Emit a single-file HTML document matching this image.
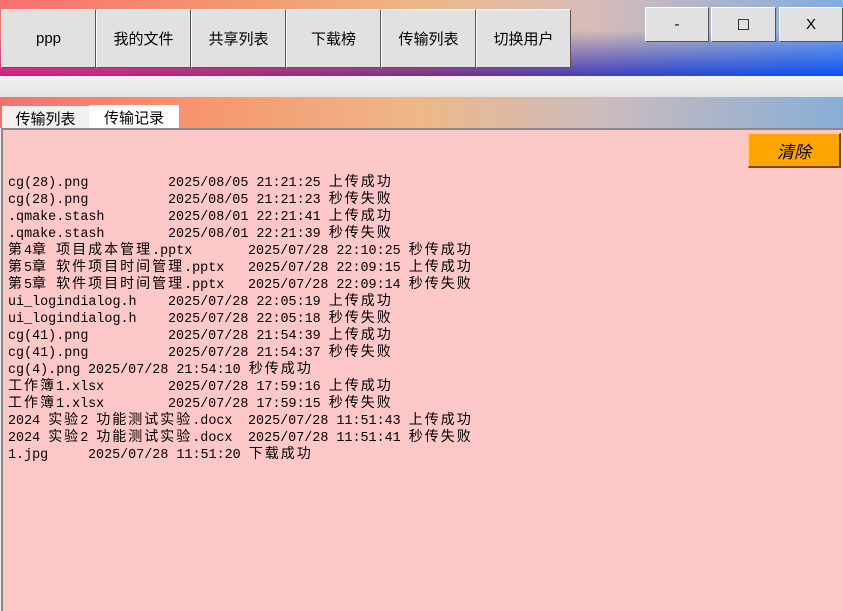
<!DOCTYPE html>
<html><head><meta charset="utf-8"><style>
*{margin:0;padding:0;box-sizing:border-box}
body{width:843px;height:611px;overflow:hidden;position:relative;background:#f0f0f0;font-family:"Liberation Sans","Noto Sans CJK SC",sans-serif;}
.hdr{position:absolute;left:0;top:0;width:843px;height:76px;background:linear-gradient(to right,#f87070,#f39a70 30%,#ecb888 50%,#d8bcb8 70%,#80ace0);}
.hdr::after{content:"";position:absolute;inset:0;background:linear-gradient(to right,#d02088,#a02880 30%,#6a3090 55%,#2848d0 80%,#0c50f8);-webkit-mask-image:linear-gradient(to bottom,transparent 40%,black 100%);mask-image:linear-gradient(to bottom,transparent 40%,black 100%);}
.b{position:absolute;z-index:2;background:#e1e1e1;border:1px solid #fff;border-right-color:#555;border-bottom-color:#555;font-size:15px;color:#000;display:flex;align-items:center;justify-content:center;}
.band{position:absolute;left:0;top:76px;width:843px;height:21px;background:linear-gradient(#f2f2f2,#e4e4e4);}
.g2{position:absolute;left:0;top:97px;width:843px;height:31px;background:linear-gradient(to right,#f87070,#f59870 25%,#eeb888 50%,#cfbcbc 70%,#88aed6);}
.tab{position:absolute;top:106px;height:22px;font-size:15px;display:flex;align-items:center;justify-content:center;padding-top:2px}
.panel{position:absolute;left:1px;top:128px;width:842px;height:483px;background:#ffc8c8;border-top:2px solid #8a8a8a;border-left:2px solid #8a8a8a;}
.clr{position:absolute;left:748px;top:133px;width:93px;height:35px;background:#ffa500;border:1px solid #ffd080;border-right:2px solid #7a4a00;border-bottom:2px solid #7a4a00;font-style:italic;font-size:17px;display:flex;align-items:center;justify-content:center;}
.l{position:absolute;height:17px;font-family:"Liberation Mono","Noto Sans CJK SC",monospace;font-size:13.4px;line-height:17px;white-space:pre;color:#000;}
.c{font-size:14px;letter-spacing:2px}
</style></head><body>
<div class="hdr"></div>
<div class="b" style="left:1px;top:9px;width:95px;height:59px">ppp</div>
<div class="b" style="left:96px;top:9px;width:95px;height:59px">我的文件</div>
<div class="b" style="left:191px;top:9px;width:95px;height:59px">共享列表</div>
<div class="b" style="left:286px;top:9px;width:95px;height:59px">下载榜</div>
<div class="b" style="left:381px;top:9px;width:95px;height:59px">传输列表</div>
<div class="b" style="left:476px;top:9px;width:95px;height:59px">切换用户</div>
<div class="b" style="left:645px;top:7px;width:64px;height:35px">-</div>
<div class="b" style="left:711px;top:7px;width:65px;height:35px">☐</div>
<div class="b" style="left:779px;top:7px;width:64px;height:35px">X</div>
<div class="band"></div>
<div class="g2"></div>
<div class="tab" style="left:2px;width:87px;background:#f0f0f0">传输列表</div>
<div class="tab" style="left:89px;width:90px;background:#fff;top:105px;height:23px">传输记录</div>
<div class="panel"></div>
<div class="clr">清除</div>
<div class="l" style="left:8px;top:175px">cg(28).png</div><div class="l" style="left:168px;top:175px">2025/08/05 21:21:25 <span class="c">上传成功</span></div>
<div class="l" style="left:8px;top:192px">cg(28).png</div><div class="l" style="left:168px;top:192px">2025/08/05 21:21:23 <span class="c">秒传失败</span></div>
<div class="l" style="left:8px;top:209px">.qmake.stash</div><div class="l" style="left:168px;top:209px">2025/08/01 22:21:41 <span class="c">上传成功</span></div>
<div class="l" style="left:8px;top:226px">.qmake.stash</div><div class="l" style="left:168px;top:226px">2025/08/01 22:21:39 <span class="c">秒传失败</span></div>
<div class="l" style="left:8px;top:243px"><span class="c">第</span>4<span class="c">章</span> <span class="c">项目成本管理</span>.pptx</div><div class="l" style="left:248px;top:243px">2025/07/28 22:10:25 <span class="c">秒传成功</span></div>
<div class="l" style="left:8px;top:260px"><span class="c">第</span>5<span class="c">章</span> <span class="c">软件项目时间管理</span>.pptx</div><div class="l" style="left:248px;top:260px">2025/07/28 22:09:15 <span class="c">上传成功</span></div>
<div class="l" style="left:8px;top:277px"><span class="c">第</span>5<span class="c">章</span> <span class="c">软件项目时间管理</span>.pptx</div><div class="l" style="left:248px;top:277px">2025/07/28 22:09:14 <span class="c">秒传失败</span></div>
<div class="l" style="left:8px;top:294px">ui_logindialog.h</div><div class="l" style="left:168px;top:294px">2025/07/28 22:05:19 <span class="c">上传成功</span></div>
<div class="l" style="left:8px;top:311px">ui_logindialog.h</div><div class="l" style="left:168px;top:311px">2025/07/28 22:05:18 <span class="c">秒传失败</span></div>
<div class="l" style="left:8px;top:328px">cg(41).png</div><div class="l" style="left:168px;top:328px">2025/07/28 21:54:39 <span class="c">上传成功</span></div>
<div class="l" style="left:8px;top:345px">cg(41).png</div><div class="l" style="left:168px;top:345px">2025/07/28 21:54:37 <span class="c">秒传失败</span></div>
<div class="l" style="left:8px;top:362px">cg(4).png</div><div class="l" style="left:88px;top:362px">2025/07/28 21:54:10 <span class="c">秒传成功</span></div>
<div class="l" style="left:8px;top:379px"><span class="c">工作簿</span>1.xlsx</div><div class="l" style="left:168px;top:379px">2025/07/28 17:59:16 <span class="c">上传成功</span></div>
<div class="l" style="left:8px;top:396px"><span class="c">工作簿</span>1.xlsx</div><div class="l" style="left:168px;top:396px">2025/07/28 17:59:15 <span class="c">秒传失败</span></div>
<div class="l" style="left:8px;top:413px">2024 <span class="c">实验</span>2 <span class="c">功能测试实验</span>.docx</div><div class="l" style="left:248px;top:413px">2025/07/28 11:51:43 <span class="c">上传成功</span></div>
<div class="l" style="left:8px;top:430px">2024 <span class="c">实验</span>2 <span class="c">功能测试实验</span>.docx</div><div class="l" style="left:248px;top:430px">2025/07/28 11:51:41 <span class="c">秒传失败</span></div>
<div class="l" style="left:8px;top:447px">1.jpg</div><div class="l" style="left:88px;top:447px">2025/07/28 11:51:20 <span class="c">下载成功</span></div>
</body></html>
